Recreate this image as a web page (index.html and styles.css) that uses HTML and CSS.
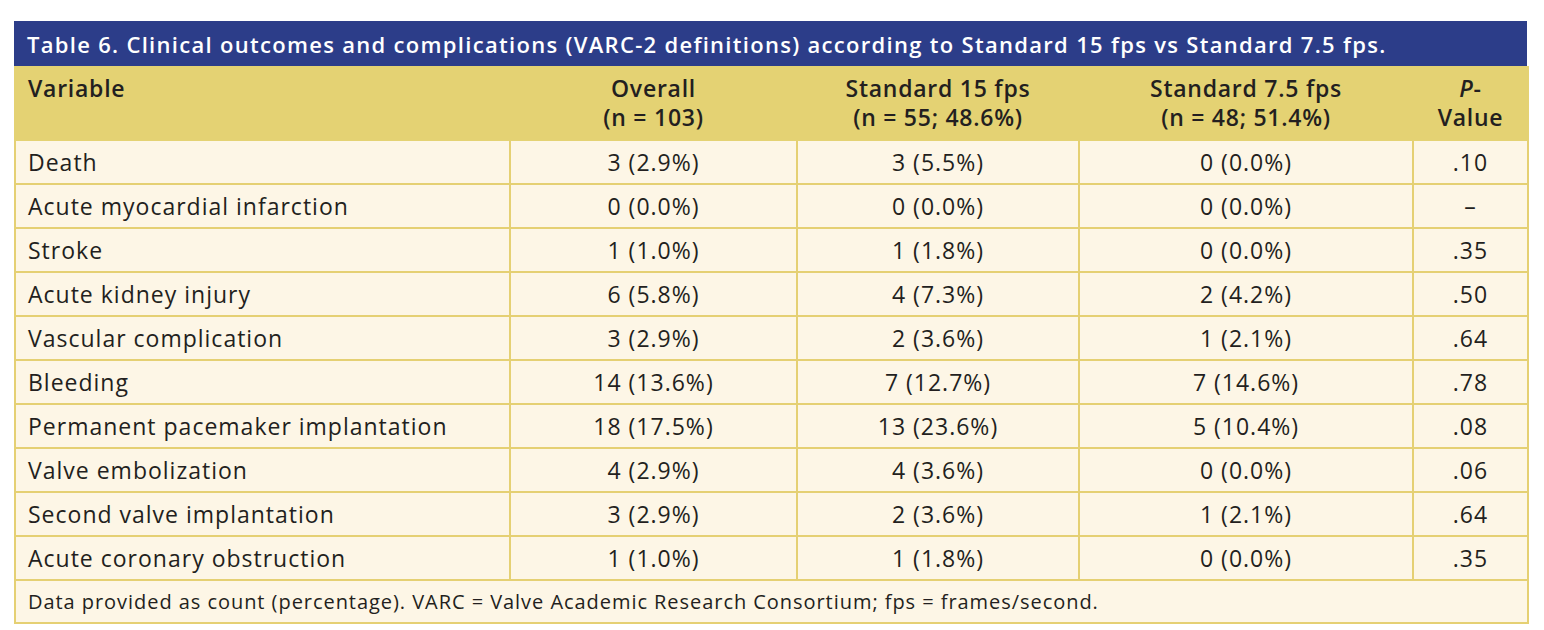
FILE: index.html
```html
<!DOCTYPE html>
<html lang="en">
<head>
<meta charset="utf-8">
<title>Table 6</title>
<link rel="stylesheet" href="styles.css">
</head>
<body>
<div class="wrap">
  <div class="caption">Table 6. Clinical outcomes and complications (VARC-2 definitions) according to Standard 15 fps vs Standard 7.5 fps.</div>
  <table class="data">
    <colgroup>
      <col class="c1"><col class="c2"><col class="c3"><col class="c4"><col class="c5">
    </colgroup>
    <thead>
      <tr>
        <th class="left">Variable</th>
        <th>Overall<br>(n = 103)</th>
        <th>Standard 15 fps<br>(n = 55; 48.6%)</th>
        <th>Standard 7.5 fps<br>(n = 48; 51.4%)</th>
        <th><i>P</i>-<br>Value</th>
      </tr>
    </thead>
    <tbody>
      <tr><td class="left">Death</td><td>3 (2.9%)</td><td>3 (5.5%)</td><td>0 (0.0%)</td><td>.10</td></tr>
      <tr><td class="left">Acute myocardial infarction</td><td>0 (0.0%)</td><td>0 (0.0%)</td><td>0 (0.0%)</td><td>–</td></tr>
      <tr><td class="left">Stroke</td><td>1 (1.0%)</td><td>1 (1.8%)</td><td>0 (0.0%)</td><td>.35</td></tr>
      <tr><td class="left">Acute kidney injury</td><td>6 (5.8%)</td><td>4 (7.3%)</td><td>2 (4.2%)</td><td>.50</td></tr>
      <tr><td class="left">Vascular complication</td><td>3 (2.9%)</td><td>2 (3.6%)</td><td>1 (2.1%)</td><td>.64</td></tr>
      <tr><td class="left">Bleeding</td><td>14 (13.6%)</td><td>7 (12.7%)</td><td>7 (14.6%)</td><td>.78</td></tr>
      <tr><td class="left">Permanent pacemaker implantation</td><td>18 (17.5%)</td><td>13 (23.6%)</td><td>5 (10.4%)</td><td>.08</td></tr>
      <tr><td class="left">Valve embolization</td><td>4 (2.9%)</td><td>4 (3.6%)</td><td>0 (0.0%)</td><td>.06</td></tr>
      <tr><td class="left">Second valve implantation</td><td>3 (2.9%)</td><td>2 (3.6%)</td><td>1 (2.1%)</td><td>.64</td></tr>
      <tr><td class="left">Acute coronary obstruction</td><td>1 (1.0%)</td><td>1 (1.8%)</td><td>0 (0.0%)</td><td>.35</td></tr>
    </tbody>
    <tfoot>
      <tr><td class="note" colspan="5">Data provided as count (percentage). VARC = Valve Academic Research Consortium; fps = frames/second.</td></tr>
    </tfoot>
  </table>
</div>
</body>
</html>
```
FILE: styles.css
```css
html, body {
  margin: 0;
  padding: 0;
  background: #ffffff;
}
body {
  font-family: "Open Sans", "Liberation Sans", sans-serif;
  color: #231f20;
}
.wrap {
  width: 1513px;
  margin: 21px 0 0 14px;
}
.caption {
  background: #2c3d89;
  color: #ffffff;
  font-size: 22px;
  letter-spacing: 1.3px;
  font-weight: 600;
  height: 45px;
  line-height: 46px;
  padding-left: 13px;
  box-sizing: border-box;
  white-space: nowrap;
}
.data {
  width: 1513px;
  border-collapse: collapse;
  table-layout: fixed;
  font-size: 23px;
  letter-spacing: 1px;
}
.c1 { width: 495px; }
.c2 { width: 287px; }
.c3 { width: 282px; }
.c4 { width: 334px; }
.c5 { width: 115px; }
.data th {
  background: #e4d273;
  font-weight: 600;
  letter-spacing: 0.75px;
  text-align: center;
  vertical-align: top;
  height: 74px;
  line-height: 29px;
  padding: 8px 12px 0;
  box-sizing: border-box;
  border: 2px solid #e4d273;
  border-top: 0;
}
.data td {
  background: #fdf6e6;
  border: 2px solid #e5d073;
  text-align: center;
  height: 44px;
  padding: 0 12px;
  line-height: 28px;
  box-sizing: border-box;
}
.data .left {
  text-align: left;
}
.data td.note {
  text-align: left;
  font-size: 20px;
  letter-spacing: 0.95px;
  height: 43px;
}
```
